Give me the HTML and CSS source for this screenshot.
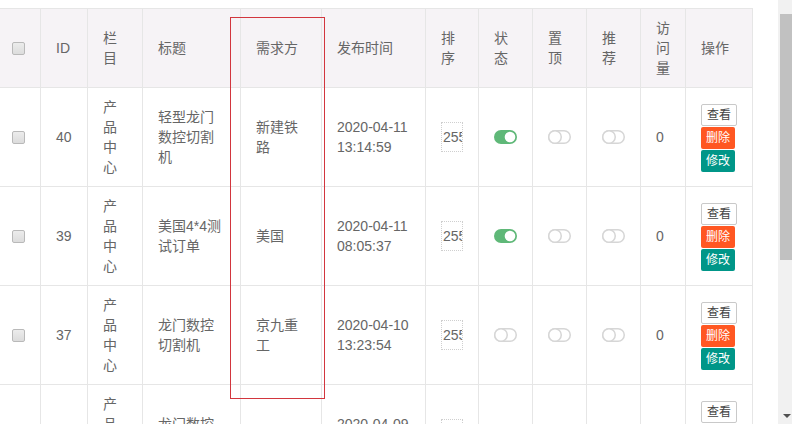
FILE: index.html
```html
<!DOCTYPE html>
<html lang="zh-CN">
<head>
<meta charset="utf-8">
<title>需求列表</title>
<link rel="stylesheet" href="styles.css">
</head>
<body>
<div class="page">
  <div class="content">
    <table class="grid">
      <thead>
        <tr>
          <th class="c-cb"><span class="cb"></span></th>
          <th class="c-id">ID</th>
          <th class="c-cat">栏目</th>
          <th class="c-title">标题</th>
          <th class="c-buyer">需求方</th>
          <th class="c-time">发布时间</th>
          <th class="c-sort">排序</th>
          <th class="c-state">状态</th>
          <th class="c-top">置顶</th>
          <th class="c-rec">推荐</th>
          <th class="c-visit">访问量</th>
          <th class="c-ops">操作</th>
        </tr>
      </thead>
      <tbody>
        <tr>
          <td class="c-cb"><span class="cb"></span></td>
          <td>40</td>
          <td>产品中心</td>
          <td>轻型龙门数控切割机</td>
          <td>新建铁路</td>
          <td>2020-04-11 13:14:59</td>
          <td><input class="sort-input" type="text" value="255"></td>
          <td><svg class="sw" width="23" height="14" viewBox="0 0 23 14"><rect x="0" y="0" width="23" height="14" rx="7" fill="#5FB878"/><circle cx="16" cy="7" r="5.3" fill="#fff"/></svg></td>
          <td><svg class="sw" width="23" height="14" viewBox="0 0 23 14"><rect x="0.75" y="0.75" width="21.5" height="12.5" rx="6.25" fill="#fff" stroke="#d6d6d6" stroke-width="1.5"/><circle cx="7" cy="7" r="6.25" fill="#fff" stroke="#d6d6d6" stroke-width="1.5"/></svg></td>
          <td><svg class="sw" width="23" height="14" viewBox="0 0 23 14"><rect x="0.75" y="0.75" width="21.5" height="12.5" rx="6.25" fill="#fff" stroke="#d6d6d6" stroke-width="1.5"/><circle cx="7" cy="7" r="6.25" fill="#fff" stroke="#d6d6d6" stroke-width="1.5"/></svg></td>
          <td>0</td>
          <td><div class="ops"><span class="btn btn-plain">查看</span><span class="btn btn-danger">删除</span><span class="btn btn-edit">修改</span></div></td>
        </tr>
        <tr>
          <td class="c-cb"><span class="cb"></span></td>
          <td>39</td>
          <td>产品中心</td>
          <td>美国4*4测试订单</td>
          <td>美国</td>
          <td>2020-04-11 08:05:37</td>
          <td><input class="sort-input" type="text" value="255"></td>
          <td><svg class="sw" width="23" height="14" viewBox="0 0 23 14"><rect x="0" y="0" width="23" height="14" rx="7" fill="#5FB878"/><circle cx="16" cy="7" r="5.3" fill="#fff"/></svg></td>
          <td><svg class="sw" width="23" height="14" viewBox="0 0 23 14"><rect x="0.75" y="0.75" width="21.5" height="12.5" rx="6.25" fill="#fff" stroke="#d6d6d6" stroke-width="1.5"/><circle cx="7" cy="7" r="6.25" fill="#fff" stroke="#d6d6d6" stroke-width="1.5"/></svg></td>
          <td><svg class="sw" width="23" height="14" viewBox="0 0 23 14"><rect x="0.75" y="0.75" width="21.5" height="12.5" rx="6.25" fill="#fff" stroke="#d6d6d6" stroke-width="1.5"/><circle cx="7" cy="7" r="6.25" fill="#fff" stroke="#d6d6d6" stroke-width="1.5"/></svg></td>
          <td>0</td>
          <td><div class="ops"><span class="btn btn-plain">查看</span><span class="btn btn-danger">删除</span><span class="btn btn-edit">修改</span></div></td>
        </tr>
        <tr>
          <td class="c-cb"><span class="cb"></span></td>
          <td>37</td>
          <td>产品中心</td>
          <td>龙门数控切割机</td>
          <td>京九重工</td>
          <td>2020-04-10 13:23:54</td>
          <td><input class="sort-input" type="text" value="255"></td>
          <td><svg class="sw" width="23" height="14" viewBox="0 0 23 14"><rect x="0.75" y="0.75" width="21.5" height="12.5" rx="6.25" fill="#fff" stroke="#d6d6d6" stroke-width="1.5"/><circle cx="7" cy="7" r="6.25" fill="#fff" stroke="#d6d6d6" stroke-width="1.5"/></svg></td>
          <td><svg class="sw" width="23" height="14" viewBox="0 0 23 14"><rect x="0.75" y="0.75" width="21.5" height="12.5" rx="6.25" fill="#fff" stroke="#d6d6d6" stroke-width="1.5"/><circle cx="7" cy="7" r="6.25" fill="#fff" stroke="#d6d6d6" stroke-width="1.5"/></svg></td>
          <td><svg class="sw" width="23" height="14" viewBox="0 0 23 14"><rect x="0.75" y="0.75" width="21.5" height="12.5" rx="6.25" fill="#fff" stroke="#d6d6d6" stroke-width="1.5"/><circle cx="7" cy="7" r="6.25" fill="#fff" stroke="#d6d6d6" stroke-width="1.5"/></svg></td>
          <td>0</td>
          <td><div class="ops"><span class="btn btn-plain">查看</span><span class="btn btn-danger">删除</span><span class="btn btn-edit">修改</span></div></td>
        </tr>
        <tr>
          <td class="c-cb"><span class="cb"></span></td>
          <td>36</td>
          <td>产品中心</td>
          <td>龙门数控切割机</td>
          <td>京九</td>
          <td>2020-04-09 16:42:10</td>
          <td><input class="sort-input" type="text" value="255"></td>
          <td><svg class="sw" width="23" height="14" viewBox="0 0 23 14"><rect x="0.75" y="0.75" width="21.5" height="12.5" rx="6.25" fill="#fff" stroke="#d6d6d6" stroke-width="1.5"/><circle cx="7" cy="7" r="6.25" fill="#fff" stroke="#d6d6d6" stroke-width="1.5"/></svg></td>
          <td><svg class="sw" width="23" height="14" viewBox="0 0 23 14"><rect x="0.75" y="0.75" width="21.5" height="12.5" rx="6.25" fill="#fff" stroke="#d6d6d6" stroke-width="1.5"/><circle cx="7" cy="7" r="6.25" fill="#fff" stroke="#d6d6d6" stroke-width="1.5"/></svg></td>
          <td><svg class="sw" width="23" height="14" viewBox="0 0 23 14"><rect x="0.75" y="0.75" width="21.5" height="12.5" rx="6.25" fill="#fff" stroke="#d6d6d6" stroke-width="1.5"/><circle cx="7" cy="7" r="6.25" fill="#fff" stroke="#d6d6d6" stroke-width="1.5"/></svg></td>
          <td>0</td>
          <td><div class="ops"><span class="btn btn-plain">查看</span><span class="btn btn-danger">删除</span><span class="btn btn-edit">修改</span></div></td>
        </tr>
      </tbody>
    </table>
    <div class="mark"></div>
  </div>
  <div class="scrollbar">
    <div class="thumb"></div>
    <div class="arrow-btn"><span class="arrow-down"></span></div>
  </div>
</div>
</body>
</html>
```

FILE: styles.css
```css
html, body {
  margin: 0;
  padding: 0;
  height: 424px;
  overflow: hidden;
  background: #fff;
}

.page {
  display: flex;
  width: 795px;
  height: 424px;
  overflow: hidden;
}

.content {
  position: relative;
  width: 778px;
  flex: 0 0 778px;
  height: 424px;
  padding-top: 8px;
  box-sizing: border-box;
  overflow: hidden;
}

.grid {
  table-layout: fixed;
  width: 753px;
  border-collapse: separate;
  border-spacing: 0;
  border-top: 1px solid #e6e6e6;
  font-family: "Liberation Sans", "Noto Sans CJK SC", sans-serif;
  font-size: 14px;
  line-height: 20px;
  color: #666;
}

.grid th,
.grid td {
  box-sizing: border-box;
  padding: 9px 15px;
  border-right: 1px solid #e6e6e6;
  border-bottom: 1px solid #e6e6e6;
  text-align: left;
  vertical-align: middle;
  font-weight: normal;
  word-break: break-all;
}

.grid thead th {
  background: #f6f3f6;
}

.grid .c-cb { width: 41px; padding: 9px 0 9px 12px; }
.grid .c-id { width: 47px; }
.grid .c-cat { width: 55px; }
.grid .c-title { width: 98px; }
.grid .c-buyer { width: 81px; }
.grid .c-time { width: 104px; }
.grid .c-sort { width: 53px; }
.grid .c-state { width: 54px; }
.grid .c-top { width: 54px; }
.grid .c-rec { width: 54px; }
.grid .c-visit { width: 45px; }
.grid .c-ops { width: 67px; }

.cb {
  display: block;
  width: 13px;
  height: 13px;
  box-sizing: border-box;
  border: 1px solid #b9b9b9;
  border-radius: 2px;
  background: linear-gradient(#ececec, #dcdcdc);
}

.sort-input {
  display: block;
  width: 22px;
  height: 30px;
  box-sizing: border-box;
  margin: 0;
  padding: 0 0 0 1px;
  border: 1px dotted #cfcfcf;
  background: #fff;
  font-family: "Liberation Sans", sans-serif;
  font-size: 14px;
  color: #666;
  outline: none;
}

.sw {
  display: block;
}

.ops {
  display: flex;
  flex-direction: column;
  align-items: flex-start;
  gap: 1px;
  padding-top: 1px;
}

.btn {
  display: block;
  height: 22px;
  line-height: 22px;
  padding: 0 5px;
  font-size: 12px;
  border-radius: 2px;
  color: #fff;
  white-space: nowrap;
}

.btn-plain {
  height: 20px;
  line-height: 20px;
  border: 1px solid #c9c9c9;
  background: #fff;
  color: #444;
}

.btn-danger {
  background: #ff5722;
}

.btn-edit {
  background: #009688;
}

.mark {
  position: absolute;
  left: 230px;
  top: 17px;
  width: 95px;
  height: 382px;
  box-sizing: border-box;
  border: 1px solid #d2363e;
}

.scrollbar {
  flex: 0 0 17px;
  width: 17px;
  height: 424px;
  background: #f1f1f1;
  display: flex;
  flex-direction: column;
  padding-top: 14px;
  box-sizing: border-box;
}

.thumb {
  height: 246px;
  margin: 0 2px;
  background: #c1c1c1;
}

.arrow-btn {
  margin-top: auto;
  height: 17px;
  display: flex;
  align-items: center;
  justify-content: center;
}

.arrow-down {
  width: 0;
  height: 0;
  border-left: 4px solid transparent;
  border-right: 4px solid transparent;
  border-top: 4px solid #505050;
}
```
